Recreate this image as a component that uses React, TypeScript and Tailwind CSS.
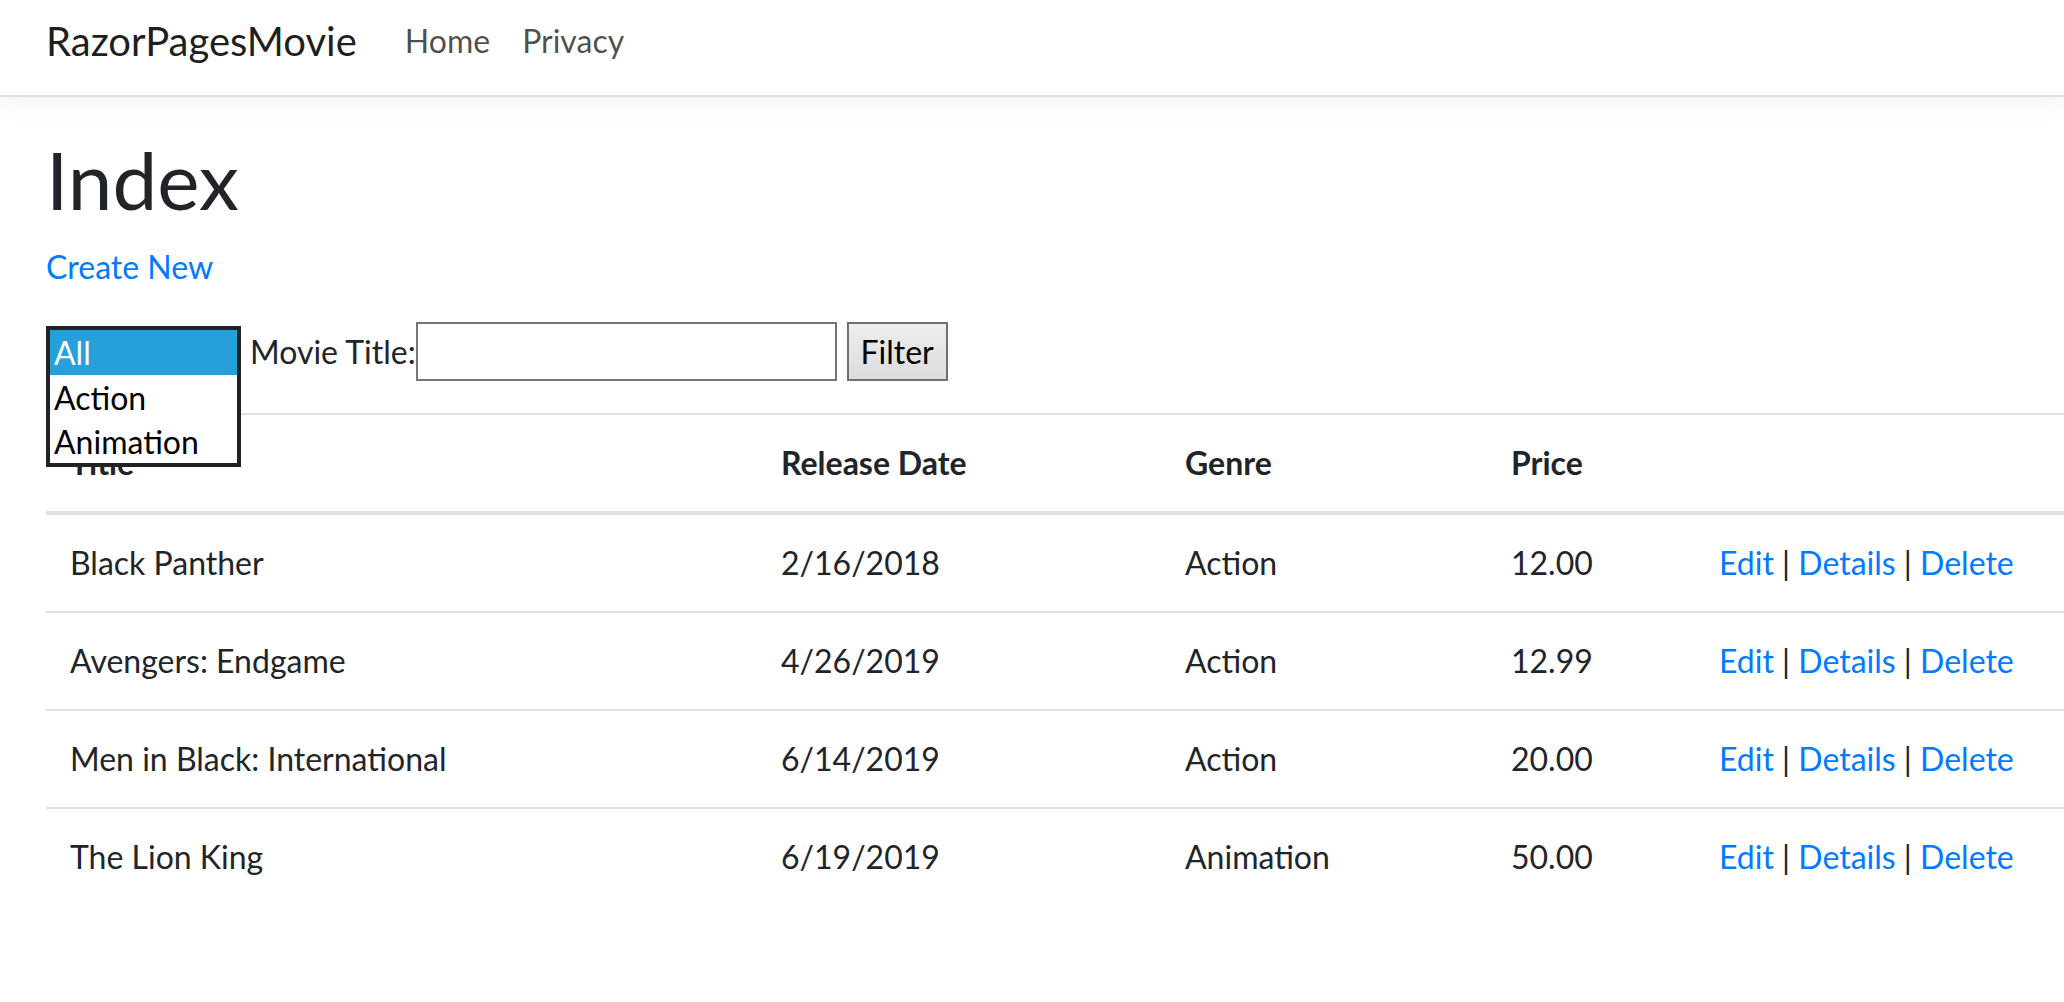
import React from "react";

const movies = [
  { title: "Black Panther", date: "2/16/2018", genre: "Action", price: "12.00" },
  { title: "Avengers: Endgame", date: "4/26/2019", genre: "Action", price: "12.99" },
  { title: "Men in Black: International", date: "6/14/2019", genre: "Action", price: "20.00" },
  { title: "The Lion King", date: "6/19/2019", genre: "Animation", price: "50.00" },
];

const cols = "grid grid-cols-[711px_404px_326px_208px_1fr]";

export default function App() {
  return (
    <div
      className="min-h-screen w-full overflow-hidden bg-white text-[#212529]"
      style={{ fontFamily: '"Segoe UI", Lato, "Noto Sans", sans-serif' }}
    >
      <header className="h-[97px] border-b-2 border-[#dee2e6] bg-white shadow-[0_8px_24px_rgba(0,0,0,0.05)]">
        <div className="flex items-center pl-[46px] pt-[11px]">
          <a className="mr-[32px] text-[40px] leading-[60px] text-black/90">RazorPagesMovie</a>
          <a className="px-[16px] text-[32px] leading-[60px] text-black/70">Home</a>
          <a className="px-[16px] text-[32px] leading-[60px] text-black/70">Privacy</a>
        </div>
      </header>

      <main className="pl-[46px] pt-[34px]">
        <h1 className="mb-[16px] text-[80px] font-normal leading-[96px]">Index</h1>
        <p className="mb-[31px] text-[32px] leading-[48px]">
          <a className="text-[#007bff]">Create New</a>
        </p>

        <div className="mb-[32px] flex h-[59px] items-center text-[32px]">
          <div className="relative h-[59px] w-[195px]">
            <div className="absolute left-0 top-[4px] z-10 h-[141px] w-[195px] border-4 border-[#222222] bg-white">
              <div className="h-[45px] bg-[#26a0da] pl-[4px] text-[32px] leading-[45px] text-white">All</div>
              <div className="h-[45px] pl-[4px] text-[32px] leading-[45px] text-black">Action</div>
              <div className="h-[43px] pl-[4px] text-[32px] leading-[43px] text-black">Animation</div>
            </div>
          </div>
          <span className="ml-[9px] leading-[48px]">Movie Title:</span>
          <div className="h-[59px] w-[421px] border-2 border-[#767676] bg-white" />
          <button className="ml-[10px] h-[59px] w-[101px] border-2 border-[#707070] bg-gradient-to-b from-[#ededed] to-[#dcdcdc] text-[32px] leading-[48px] text-black">
            Filter
          </button>
        </div>

        <div className="border-t-2 border-[#dee2e6]">
          <div className={`${cols} border-b-4 border-[#dee2e6] text-[32px] font-bold leading-[48px]`}>
            <div className="px-[24px] py-[24px]">Title</div>
            <div className="px-[24px] py-[24px]">Release Date</div>
            <div className="px-[24px] py-[24px]">Genre</div>
            <div className="px-[24px] py-[24px]">Price</div>
            <div className="px-[24px] py-[24px]"></div>
          </div>
          {movies.map((m, i) => (
            <div
              key={m.title}
              className={`${cols} text-[32px] leading-[48px] ${i > 0 ? "border-t-2 border-[#dee2e6]" : ""}`}
            >
              <div className="px-[24px] py-[24px]">{m.title}</div>
              <div className="px-[24px] py-[24px]">{m.date}</div>
              <div className="px-[24px] py-[24px]">{m.genre}</div>
              <div className="px-[24px] py-[24px]">{m.price}</div>
              <div className="whitespace-nowrap px-[24px] py-[24px]">
                <a className="text-[#007bff]">Edit</a> | <a className="text-[#007bff]">Details</a> |{" "}
                <a className="text-[#007bff]">Delete</a>
              </div>
            </div>
          ))}
        </div>
      </main>
    </div>
  );
}
